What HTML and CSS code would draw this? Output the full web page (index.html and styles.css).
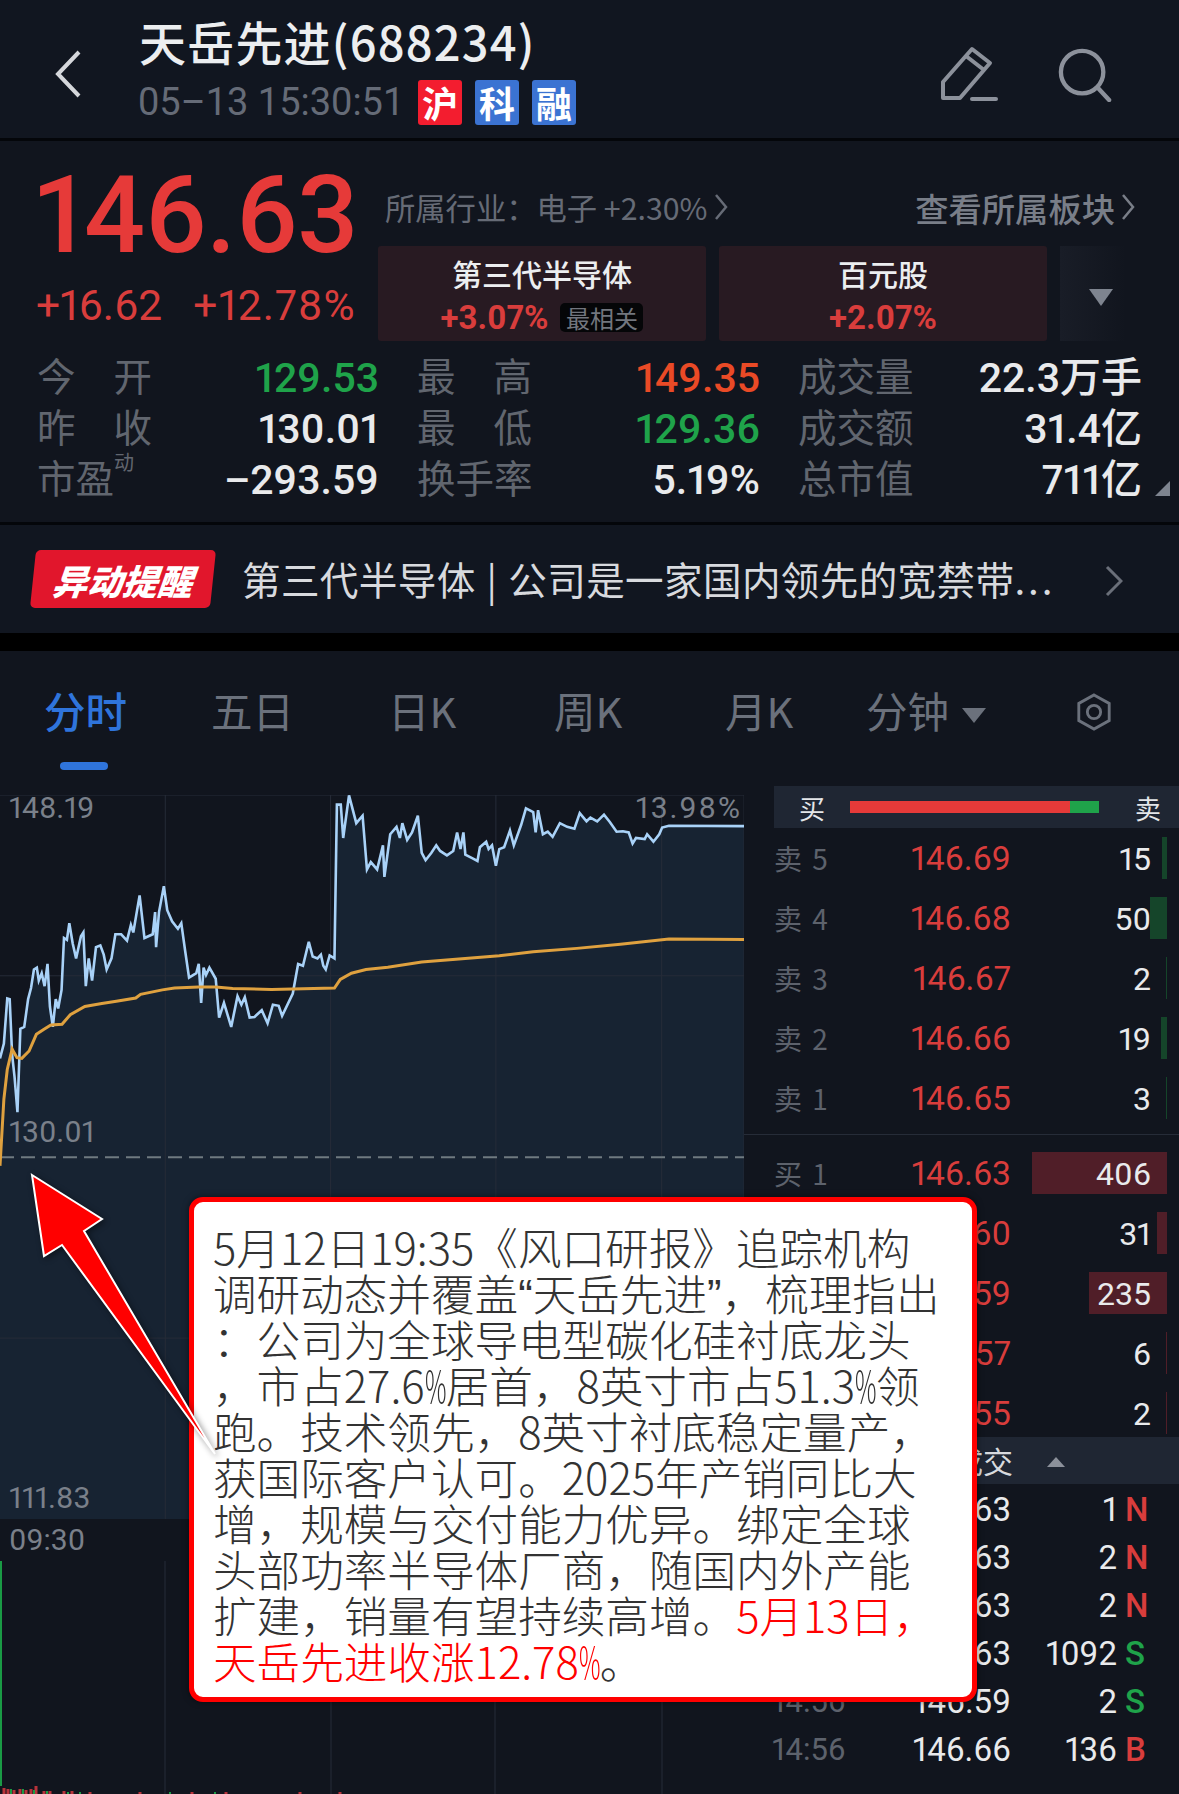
FILE: index.html
```html
<!DOCTYPE html>
<html lang="zh-CN">
<head>
<meta charset="utf-8">
<title>天岳先进(688234)</title>
<link rel="stylesheet" href="styles.css">
</head>
<body>
<div class="page">
  <header class="header">
    <svg class="back" viewBox="0 0 30 50"><path d="M26 3 L5 25 L26 47"/></svg>
    <div class="head-text">
      <div class="title">天岳先进(688234)</div>
      <div class="subline">
        <span class="time">05–13 15:30:51</span>
        <span class="tag tag-red">沪</span>
        <span class="tag tag-blue">科</span>
        <span class="tag tag-blue">融</span>
      </div>
    </div>
    <svg class="ico-pencil" viewBox="0 0 60 56"><path d="M3 50 V36 L32 3 L50 17 L20 52 H3 Z M26 10 L44 24"/><path d="M32 53 H56"/></svg>
    <svg class="ico-search" viewBox="0 0 56 56"><circle cx="25" cy="25" r="22"/><path d="M41 41 L53 54"/></svg>
  </header>

  <section class="quote">
    <div class="quote-head">
      <div class="price-col">
        <div class="price">146.63</div>
        <div class="change"><span>+16.62</span><span class="pct-chg">+12.78%</span></div>
      </div>
      <div class="sector-col">
        <div class="ind-row">
          <span class="ind">所属行业：电子 +2.30% <svg class="chev" viewBox="0 0 14 28"><path d="M2 2 L12 14 L2 26"/></svg></span>
          <span class="ind-link">查看所属板块 <svg class="chev" viewBox="0 0 14 28"><path d="M2 2 L12 14 L2 26"/></svg></span>
        </div>
        <div class="sectors">
          <div class="sector">
            <div class="sector-name">第三代半导体</div>
            <div class="sector-val">+3.07%<span class="pill">最相关</span></div>
          </div>
          <div class="sector">
            <div class="sector-name">百元股</div>
            <div class="sector-val">+2.07%</div>
          </div>
          <div class="sector-more"><span class="tri-down"></span></div>
        </div>
      </div>
    </div>
    <div class="stats">
      <div class="stat"><span class="lbl lbl-sp"><i>今</i><i>开</i></span><b class="green">129.53</b></div>
      <div class="stat"><span class="lbl lbl-sp"><i>最</i><i>高</i></span><b class="orange">149.35</b></div>
      <div class="stat"><span class="lbl">成交量</span><b>22.3万手</b></div>
      <div class="stat"><span class="lbl lbl-sp"><i>昨</i><i>收</i></span><b>130.01</b></div>
      <div class="stat"><span class="lbl lbl-sp"><i>最</i><i>低</i></span><b class="green">129.36</b></div>
      <div class="stat"><span class="lbl">成交额</span><b>31.4亿</b></div>
      <div class="stat"><span class="lbl">市盈<sup>动</sup></span><b>–293.59</b></div>
      <div class="stat"><span class="lbl">换手率</span><b>5.19%</b></div>
      <div class="stat"><span class="lbl">总市值</span><b>711亿</b></div>
    </div>
    <span class="corner"></span>
  </section>

  <section class="alert">
    <div class="alert-badge"><span>异动提醒</span></div>
    <div class="alert-text">第三代半导体 | 公司是一家国内领先的宽禁带<span class="dots">...</span></div>
    <svg class="alert-chev" viewBox="0 0 18 32"><path d="M2 2 L16 16 L2 30"/></svg>
  </section>

  <nav class="tabs">
    <span class="tab tab-on">分时</span>
    <span class="tab t2">五日</span>
    <span class="tab t3">日K</span>
    <span class="tab t4">周K</span>
    <span class="tab t5">月K</span>
    <span class="tab t6">分钟<i class="tri-tab"></i></span>
    <svg class="ico-hex" viewBox="0 0 40 40"><path d="M20 2 L36 11 V29 L20 38 L4 29 V11 Z"/><circle cx="20" cy="20" r="7"/></svg>
  </nav>

  <main class="main">
    <div class="charts">
      <div class="chart">
        <svg class="chart-svg" viewBox="0 0 744 723" preserveAspectRatio="none">
          <g transform="scale(.48474 .36996) translate(0 -419)">
            <polygon class="area" points="0,2373 0,1130 8,1090 15,968 20,970 25,1120 30,1180 36,1275 42,1050 50,1045 58,970 64,940 70,890 76,885 80,920 86,900 92,935 98,875 103,990 109,1045 115,970 120,995 127,945 132,805 138,810 143,765 150,820 157,860 167,800 172,790 177,935 183,860 190,920 198,830 207,825 214,850 220,890 230,860 238,795 250,795 262,812 270,770 275,790 288,690 298,805 315,795 320,735 322,830 328,735 338,665 345,730 355,760 367,780 374,765 382,840 390,912 405,900 410,875 415,980 420,885 425,905 432,885 445,915 452,1020 462,980 477,1045 490,962 498,985 505,965 515,1020 525,1018 540,1000 552,1035 563,985 575,988 582,1015 604,955 615,875 625,880 637,815 645,855 655,860 662,850 667,880 672,890 680,852 690,860 695,445 703,445 708,535 720,420 735,495 748,475 757,620 765,600 778,620 790,555 793,640 805,525 818,505 825,535 830,495 840,540 850,520 862,475 870,575 878,595 890,575 900,555 908,570 922,582 935,570 943,520 950,565 956,520 960,580 975,590 985,597 990,560 1003,545 1008,565 1015,555 1023,610 1030,565 1040,560 1052,515 1060,555 1075,500 1085,455 1100,465 1105,520 1110,460 1120,525 1130,518 1140,532 1155,495 1170,505 1185,510 1196,468 1210,490 1218,480 1232,490 1246,472 1258,492 1272,518 1285,517 1297,520 1305,550 1312,535 1330,538 1335,525 1348,545 1360,525 1366,507 1380,502 1535,503 1535,2373"/>
            <path class="grid" d="M341 419 V2373 M682 419 V2373 M1023 419 V2373 M1365 419 V2373 M1535 419 V2373 M0 419 H1535 M0 907 H1535 M0 1885 H1535"/>
            <path class="dash" d="M0 1397 H1535"/>
            <polyline class="line-blue" points="0,1130 8,1090 15,968 20,970 25,1120 30,1180 36,1275 42,1050 50,1045 58,970 64,940 70,890 76,885 80,920 86,900 92,935 98,875 103,990 109,1045 115,970 120,995 127,945 132,805 138,810 143,765 150,820 157,860 167,800 172,790 177,935 183,860 190,920 198,830 207,825 214,850 220,890 230,860 238,795 250,795 262,812 270,770 275,790 288,690 298,805 315,795 320,735 322,830 328,735 338,665 345,730 355,760 367,780 374,765 382,840 390,912 405,900 410,875 415,980 420,885 425,905 432,885 445,915 452,1020 462,980 477,1045 490,962 498,985 505,965 515,1020 525,1018 540,1000 552,1035 563,985 575,988 582,1015 604,955 615,875 625,880 637,815 645,855 655,860 662,850 667,880 672,890 680,852 690,860 695,445 703,445 708,535 720,420 735,495 748,475 757,620 765,600 778,620 790,555 793,640 805,525 818,505 825,535 830,495 840,540 850,520 862,475 870,575 878,595 890,575 900,555 908,570 922,582 935,570 943,520 950,565 956,520 960,580 975,590 985,597 990,560 1003,545 1008,565 1015,555 1023,610 1030,565 1040,560 1052,515 1060,555 1075,500 1085,455 1100,465 1105,520 1110,460 1120,525 1130,518 1140,532 1155,495 1170,505 1185,510 1196,468 1210,490 1218,480 1232,490 1246,472 1258,492 1272,518 1285,517 1297,520 1305,550 1312,535 1330,538 1335,525 1348,545 1360,525 1366,507 1380,502 1535,503"/>
            <polyline class="line-orange" points="0,1420 8,1240 15,1160 25,1105 35,1128 45,1130 60,1110 75,1065 90,1052 105,1040 128,1038 145,1012 175,990 210,982 240,976 280,967 290,957 335,945 360,940 410,937 445,937 480,941 560,944 690,940 702,917 725,900 755,890 800,884 870,870 1030,853 1100,842 1190,833 1280,822 1380,808 1535,809"/>
          </g>
        </svg>
        <span class="axis ax-top">148.19</span>
        <span class="axis ax-pct">13.98%</span>
        <span class="axis ax-mid">130.01</span>
        <span class="axis ax-low">111.83</span>
      </div>
      <div class="time-axis">09:30</div>
      <div class="volume">
        <svg class="vol-svg" viewBox="0 0 744 234" preserveAspectRatio="none">
          <path class="grid" d="M165 0 V234 M331 0 V234 M495 0 V234 M662 0 V234"/>
          <path class="vol-g" d="M1 0 V226"/>
          <path class="vol-r" d="M4 234 V228 M8 234 V229 M14 234 V230 M20 234 V229 M26 234 V230 M31 234 V229 M36 234 V226 M44 234 V231 M50 234 V231 M64 234 V231 M72 234 V231 M90 234 V232 M140 234 V232 M192 234 V232 M226 234 V232 M300 234 V232 M340 234 V232"/>
          <path class="vol-g" d="M11 234 V229 M23 234 V229 M34 234 V230 M47 234 V231 M68 234 V232 M80 234 V232 M170 234 V232 M215 234 V232"/>
        </svg>
      </div>
    </div>

    <aside class="book">
      <div class="ratio">
        <span>买</span>
        <div class="ratio-bar"><i class="ratio-buy"></i><i class="ratio-sell"></i></div>
        <span>卖</span>
      </div>
      <div class="ob-list ob-sell">
        <div class="ob-row"><i class="vbar vbar-g" style="width:5px"></i><span class="ob-l">卖 5</span><span class="ob-p">146.69</span><span class="ob-v">15</span></div>
        <div class="ob-row"><i class="vbar vbar-g" style="width:17px"></i><span class="ob-l">卖 4</span><span class="ob-p">146.68</span><span class="ob-v">50</span></div>
        <div class="ob-row"><i class="vbar vbar-g" style="width:1px"></i><span class="ob-l">卖 3</span><span class="ob-p">146.67</span><span class="ob-v">2</span></div>
        <div class="ob-row"><i class="vbar vbar-g" style="width:6px"></i><span class="ob-l">卖 2</span><span class="ob-p">146.66</span><span class="ob-v">19</span></div>
        <div class="ob-row"><i class="vbar vbar-g" style="width:1px"></i><span class="ob-l">卖 1</span><span class="ob-p">146.65</span><span class="ob-v">3</span></div>
      </div>
      <div class="ob-list ob-buy">
        <div class="ob-row"><i class="vbar vbar-r" style="width:135px"></i><span class="ob-l">买 1</span><span class="ob-p">146.63</span><span class="ob-v">406</span></div>
        <div class="ob-row"><i class="vbar vbar-r" style="width:10px"></i><span class="ob-l">买 2</span><span class="ob-p">146.60</span><span class="ob-v">31</span></div>
        <div class="ob-row"><i class="vbar vbar-r" style="width:78px"></i><span class="ob-l">买 3</span><span class="ob-p">146.59</span><span class="ob-v">235</span></div>
        <div class="ob-row"><i class="vbar vbar-r" style="width:1px"></i><span class="ob-l">买 4</span><span class="ob-p">146.57</span><span class="ob-v">6</span></div>
        <div class="ob-row"><i class="vbar vbar-r" style="width:1px"></i><span class="ob-l">买 5</span><span class="ob-p">146.55</span><span class="ob-v">2</span></div>
      </div>
      <div class="tick-head"><span>逐笔成交</span><i class="tri-up"></i></div>
      <div class="tick"><span class="tk-t">14:57</span><span class="tk-p">146.63</span><span class="tk-v">1</span><span class="tk-f red">N</span></div>
      <div class="tick"><span class="tk-t">14:57</span><span class="tk-p">146.63</span><span class="tk-v">2</span><span class="tk-f red">N</span></div>
      <div class="tick"><span class="tk-t">14:57</span><span class="tk-p">146.63</span><span class="tk-v">2</span><span class="tk-f red">N</span></div>
      <div class="tick"><span class="tk-t">14:57</span><span class="tk-p">146.63</span><span class="tk-v">1092</span><span class="tk-f green">S</span></div>
      <div class="tick"><span class="tk-t">14:56</span><span class="tk-p">146.59</span><span class="tk-v">2</span><span class="tk-f green">S</span></div>
      <div class="tick"><span class="tk-t">14:56</span><span class="tk-p">146.66</span><span class="tk-v">136</span><span class="tk-f red">B</span></div>
    </aside>
  </main>

  <div class="callout">
    <div>5月12日19:35《风口研报》追踪机构</div>
    <div>调研动态并覆盖<span class="q">“</span>天岳先进<span class="q">”</span>，梳理指出</div>
    <div>：公司为全球导电型碳化硅衬底龙头</div>
    <div>，市占27.6<span class="pc">%</span>居首，8英寸市占51.3<span class="pc">%</span>领</div>
    <div>跑。技术领先，8英寸衬底稳定量产，</div>
    <div>获国际客户认可。2025年产销同比大</div>
    <div>增，规模与交付能力优异。绑定全球</div>
    <div>头部功率半导体厂商，随国内外产能</div>
    <div>扩建，销量有望持续高增。<em>5月13日，</em></div>
    <div><em>天岳先进收涨12.78<span class="pc">%</span></em>。</div>
  </div>
  <svg class="arrow" viewBox="0 0 240 300"><polygon points="32,5 102,49 84,61 215,284 62,75 44,86"/></svg>
</div>
</body>
</html>
```
FILE: styles.css
```css
* { box-sizing: border-box; margin: 0; padding: 0; }
html, body { background: #000; }
body { font-family: "Noto Sans CJK SC", Roboto, sans-serif; font-variant-numeric: proportional-nums; }
i, em, b { font-style: normal; }
.page { position: relative; width: 1179px; height: 1794px; overflow: hidden; background: #11151e; }

.header { height: 141px; border-bottom: 3px solid #04060a; display: flex; align-items: flex-start; background: #111620; }
.back { width: 30px; height: 52px; margin: 48px 0 0 53px; fill: none; stroke: #d5d7db; stroke-width: 4; }
.head-text { margin-left: 56px; width: 801px; }
.title { margin-top: 11px; font-size: 47px; line-height: 60px; font-weight: 500; color: #eceef0; white-space: nowrap; letter-spacing: 1.2px; }
.subline { display: flex; align-items: center; height: 46px; margin-top: 8px; }
.time { font-family: Roboto, sans-serif; font-variant-numeric: tabular-nums; font-size: 38px; color: #656b77; width: 280px; white-space: nowrap; margin-left: -1px; }
.tag { width: 44px; height: 45px; margin-right: 13px; border-radius: 3px; color: #fff; font-size: 36px; line-height: 44px; text-align: center; font-weight: 700; }
.tag-red { background: #f31d2f; }
.tag-blue { background: #3b73d2; }
.ico-pencil { width: 60px; height: 56px; margin: 46px 0 0 0; fill: none; stroke: #8c919b; stroke-width: 4; stroke-linejoin: round; stroke-linecap: round; }
.ico-search { width: 54px; height: 54px; margin: 48px 0 0 58px; fill: none; stroke: #8c919b; stroke-width: 4.5; stroke-linecap: round; }

.quote { position: relative; height: 384px; border-bottom: 3px solid #04060a; }
.quote-head { display: grid; grid-template-columns: 340px 1fr; padding-left: 38px; height: 210px; }
.price { margin: 24px 0 0 -3px; font-family: Roboto, sans-serif; font-size: 107.5px; line-height: 100px; font-weight: 500; color: #e63a39; letter-spacing: -.5px; white-space: nowrap; }
.change { display: flex; gap: 31px; margin: 18px 0 0 -2px; font-family: Roboto, sans-serif; font-size: 42.5px; line-height: 46px; color: #d93d3c; white-space: nowrap; }
.pct-chg { letter-spacing: 1px; }
.ind-row { height: 105px; padding: 27px 44px 0 7px; display: flex; justify-content: space-between; align-items: center; }
.ind { font-size: 30.3px; color: #666b76; white-space: nowrap; display: flex; align-items: center; gap: 7px; }
.ind-link { font-size: 33.3px; color: #797e88; font-weight: 500; white-space: nowrap; display: flex; align-items: center; gap: 6px; }
.chev { width: 14px; height: 28px; fill: none; stroke: currentColor; stroke-width: 2.5; }
.sectors { display: flex; gap: 13px; height: 95px; }
.sector { width: 328px; background: #281a22; border-radius: 3px; text-align: center; padding-top: 7px; }
.sector-name { font-size: 30px; line-height: 40px; color: #eceef0; font-weight: 500; }
.sector-val { display: flex; justify-content: center; align-items: center; gap: 12px; height: 36px; margin-top: 6px; font-family: Roboto, sans-serif; font-size: 33px; font-weight: 700; color: #d93d3c; }
.pill { width: 83px; height: 29px; background: #050608; border-radius: 5px; color: #72767e; font: 400 24px/29px "Noto Sans CJK SC", sans-serif; }
.sector-more { width: 66px; background: linear-gradient(90deg, #191d27, #11151e); display: flex; align-items: center; justify-content: center; padding-top: 8px; }
.tri-down { border-left: 12px solid transparent; border-right: 12px solid transparent; border-top: 17px solid #7e848f; margin-left: 16px; }
.stats { display: grid; grid-template-columns: 341px 342px 343px; column-gap: 39px; padding-left: 37px; grid-auto-rows: 51px; }
.stat { display: flex; justify-content: space-between; align-items: center; height: 51px; }
.lbl { width: 115px; font-size: 38.5px; line-height: 51px; color: #61666f; white-space: nowrap; position: relative; top: -2px; }
.lbl sup { position: absolute; top: -1px; left: 77px; font-size: 20px; line-height: 24px; }
.lbl-sp { display: flex; justify-content: space-between; }
.stat b { position: relative; top: 1px; left: 1px; font-family: Roboto, "Noto Sans CJK SC", sans-serif; font-size: 41px; line-height: 46px; height: 46px; font-weight: 500; color: #e9eaec; white-space: nowrap; }
.stat b.green { color: #1fa34a; }
.stat b.orange { color: #ea4a26; }
.corner { position: absolute; left: 1155px; top: 340px; border-left: 15px solid transparent; border-bottom: 15px solid #7e848f; }

.alert { height: 108px; display: flex; align-items: center; background: #111620; }
.alert-badge { width: 180px; height: 58px; margin-left: 33px; background: #e1162c; border-radius: 5px; transform: skewX(-6deg); display: flex; align-items: center; justify-content: center; }
.alert-badge span { font-size: 35px; font-weight: 900; font-style: italic; color: #fff; white-space: nowrap; }
.alert-text { margin: -3px 0 0 29px; width: 858px; font-size: 38.6px; color: #d8dade; white-space: pre; letter-spacing: .35px; word-spacing: 2px; }
.dots { letter-spacing: 3px; }
.alert-chev { width: 18px; height: 32px; margin: 4px 0 0 5px; fill: none; stroke: #6a6f79; stroke-width: 3; }

.tabs { position: relative; height: 153px; border-top: 18px solid #000; background: #11151e; }
.tab { position: absolute; top: 29px; font-size: 41.5px; line-height: 60px; color: #6b717c; white-space: nowrap; }
.tab-on { left: 44px; color: #2f74db; font-weight: 500; }
.tab-on::after { content: ""; position: absolute; left: 16px; top: 82px; width: 48px; height: 8px; border-radius: 4px; background: #2f74db; }
.t2 { left: 211px; } .t3 { left: 388px; } .t4 { left: 554px; } .t5 { left: 725px; } .t6 { left: 866px; }
.tri-tab { display: inline-block; margin-left: 13px; vertical-align: 5px; border-left: 12px solid transparent; border-right: 12px solid transparent; border-top: 15px solid #6b717c; }
.ico-hex { position: absolute; left: 1075px; top: 41px; width: 38px; height: 40px; fill: none; stroke: #6b717c; stroke-width: 3; }

.main { position: relative; display: flex; height: 1008px; }
.charts { width: 744px; flex: none; padding-top: 9px; }
.chart { position: relative; height: 724px; }
.chart-svg { display: block; width: 744px; height: 724px; }
.area { fill: #172332; }
.grid { fill: none; stroke: #262c38; stroke-width: 1; vector-effect: non-scaling-stroke; }
.dash { fill: none; stroke: #6f7a80; stroke-width: 2; stroke-dasharray: 14 7; vector-effect: non-scaling-stroke; }
.line-blue { fill: none; stroke: #a9d2f8; stroke-width: 2.6; stroke-linejoin: miter; vector-effect: non-scaling-stroke; }
.line-orange { fill: none; stroke: #dfa13f; stroke-width: 3; vector-effect: non-scaling-stroke; }
.axis { position: absolute; font-family: Roboto, sans-serif; font-size: 30px; line-height: 36px; color: #7a808a; }
.ax-top { left: 9px; top: -5px; }
.ax-pct { right: 2px; top: -5px; letter-spacing: 2px; }
.ax-mid { left: 9px; top: 319px; }
.ax-low { left: 9px; top: 685px; }
.time-axis { height: 42px; padding-left: 9px; font-family: Roboto, sans-serif; font-size: 30px; line-height: 42px; color: #7a808a; }
.volume { height: 233px; }
.vol-svg { display: block; width: 744px; height: 233px; }
.vol-g { fill: none; stroke: #1a9a45; stroke-width: 2; }
.vol-r { fill: none; stroke: #b8333a; stroke-width: 3; }

.book { flex: 1; min-width: 0; }
.ratio { height: 42px; margin-left: 30px; background: #1f2633; display: flex; align-items: center; justify-content: space-between; padding: 0 18px 0 25px; font-size: 26px; color: #e4e6e9; }
.ratio-bar { width: 249px; height: 12px; display: flex; margin-right: 12px; }
.ratio-buy { width: 220px; background: #e63a39; }
.ratio-sell { flex: 1; background: #1fa34a; }
.ob-row { position: relative; height: 60px; display: grid; grid-template-columns: 110px 127px 1fr; padding: 1px 28px 0 30px; align-items: center; }
.ob-sell { border-bottom: 1px solid #262c38; height: 307px; }
.ob-buy { height: 301px; padding-top: 8px; }
.ob-l { position: relative; top: -1px; font-size: 28px; word-spacing: 4px; color: #5d626c; white-space: nowrap; font-family: "Noto Sans CJK SC", sans-serif; }
.ob-p { position: relative; font-family: Roboto, sans-serif; font-size: 33.6px; color: #d93d3c; text-align: right; }
.ob-v { position: relative; font-family: Roboto, sans-serif; font-size: 32px; color: #e9eaec; text-align: right; }
.vbar { position: absolute; right: 12px; top: 9px; height: 42px; }
.vbar-g { background: #15452a; }
.vbar-r { background: #501e28; }
.tick-head { height: 47px; margin-top: 1px; background: #1f2633; font-size: 30px; line-height: 47px; color: #d8dade; position: relative; }
.tri-up { position: absolute; left: 303px; top: 20px; border-left: 9px solid transparent; border-right: 9px solid transparent; border-bottom: 10px solid #8c919b; }
.tick-head span { position: absolute; right: 166px; }
.tick { height: 48px; display: grid; grid-template-columns: 114px 125px 106px 32px; padding: 3px 0 0 28px; align-items: center; font-family: Roboto, sans-serif; font-size: 33px; color: #e9eaec; }
.tk-t { color: #5d626c; font-size: 31px; }
.tk-p, .tk-v { text-align: right; }
.tk-f { font-weight: 500; padding-left: 8px; font-size: 33px; }
.tk-f.red { color: #d93d3c; }
.tk-f.green { color: #1fa34a; }

.callout { position: absolute; left: 189px; top: 1197px; width: 788px; height: 505px; padding: 21px 0 0 19px; background: #fff; border: 5px solid #f00; border-radius: 14px; box-shadow: 0 0 6px rgba(0,0,0,.5); font-size: 43.6px; line-height: 46px; color: #333; white-space: nowrap; font-family: "Noto Sans CJK SC", sans-serif; font-weight: 300; }
.callout em { color: #f00; }
.q { font-family: "Liberation Sans", sans-serif; line-height: 0; }
.pc { display: inline-block; width: 21px; line-height: 0; transform: scaleX(.55); transform-origin: left center; }
.arrow { position: absolute; left: 0; top: 1170px; width: 240px; height: 300px; fill: #f00; stroke: #fff; stroke-width: 2; filter: drop-shadow(2px 2px 3px rgba(0,0,0,.45)); }
```
